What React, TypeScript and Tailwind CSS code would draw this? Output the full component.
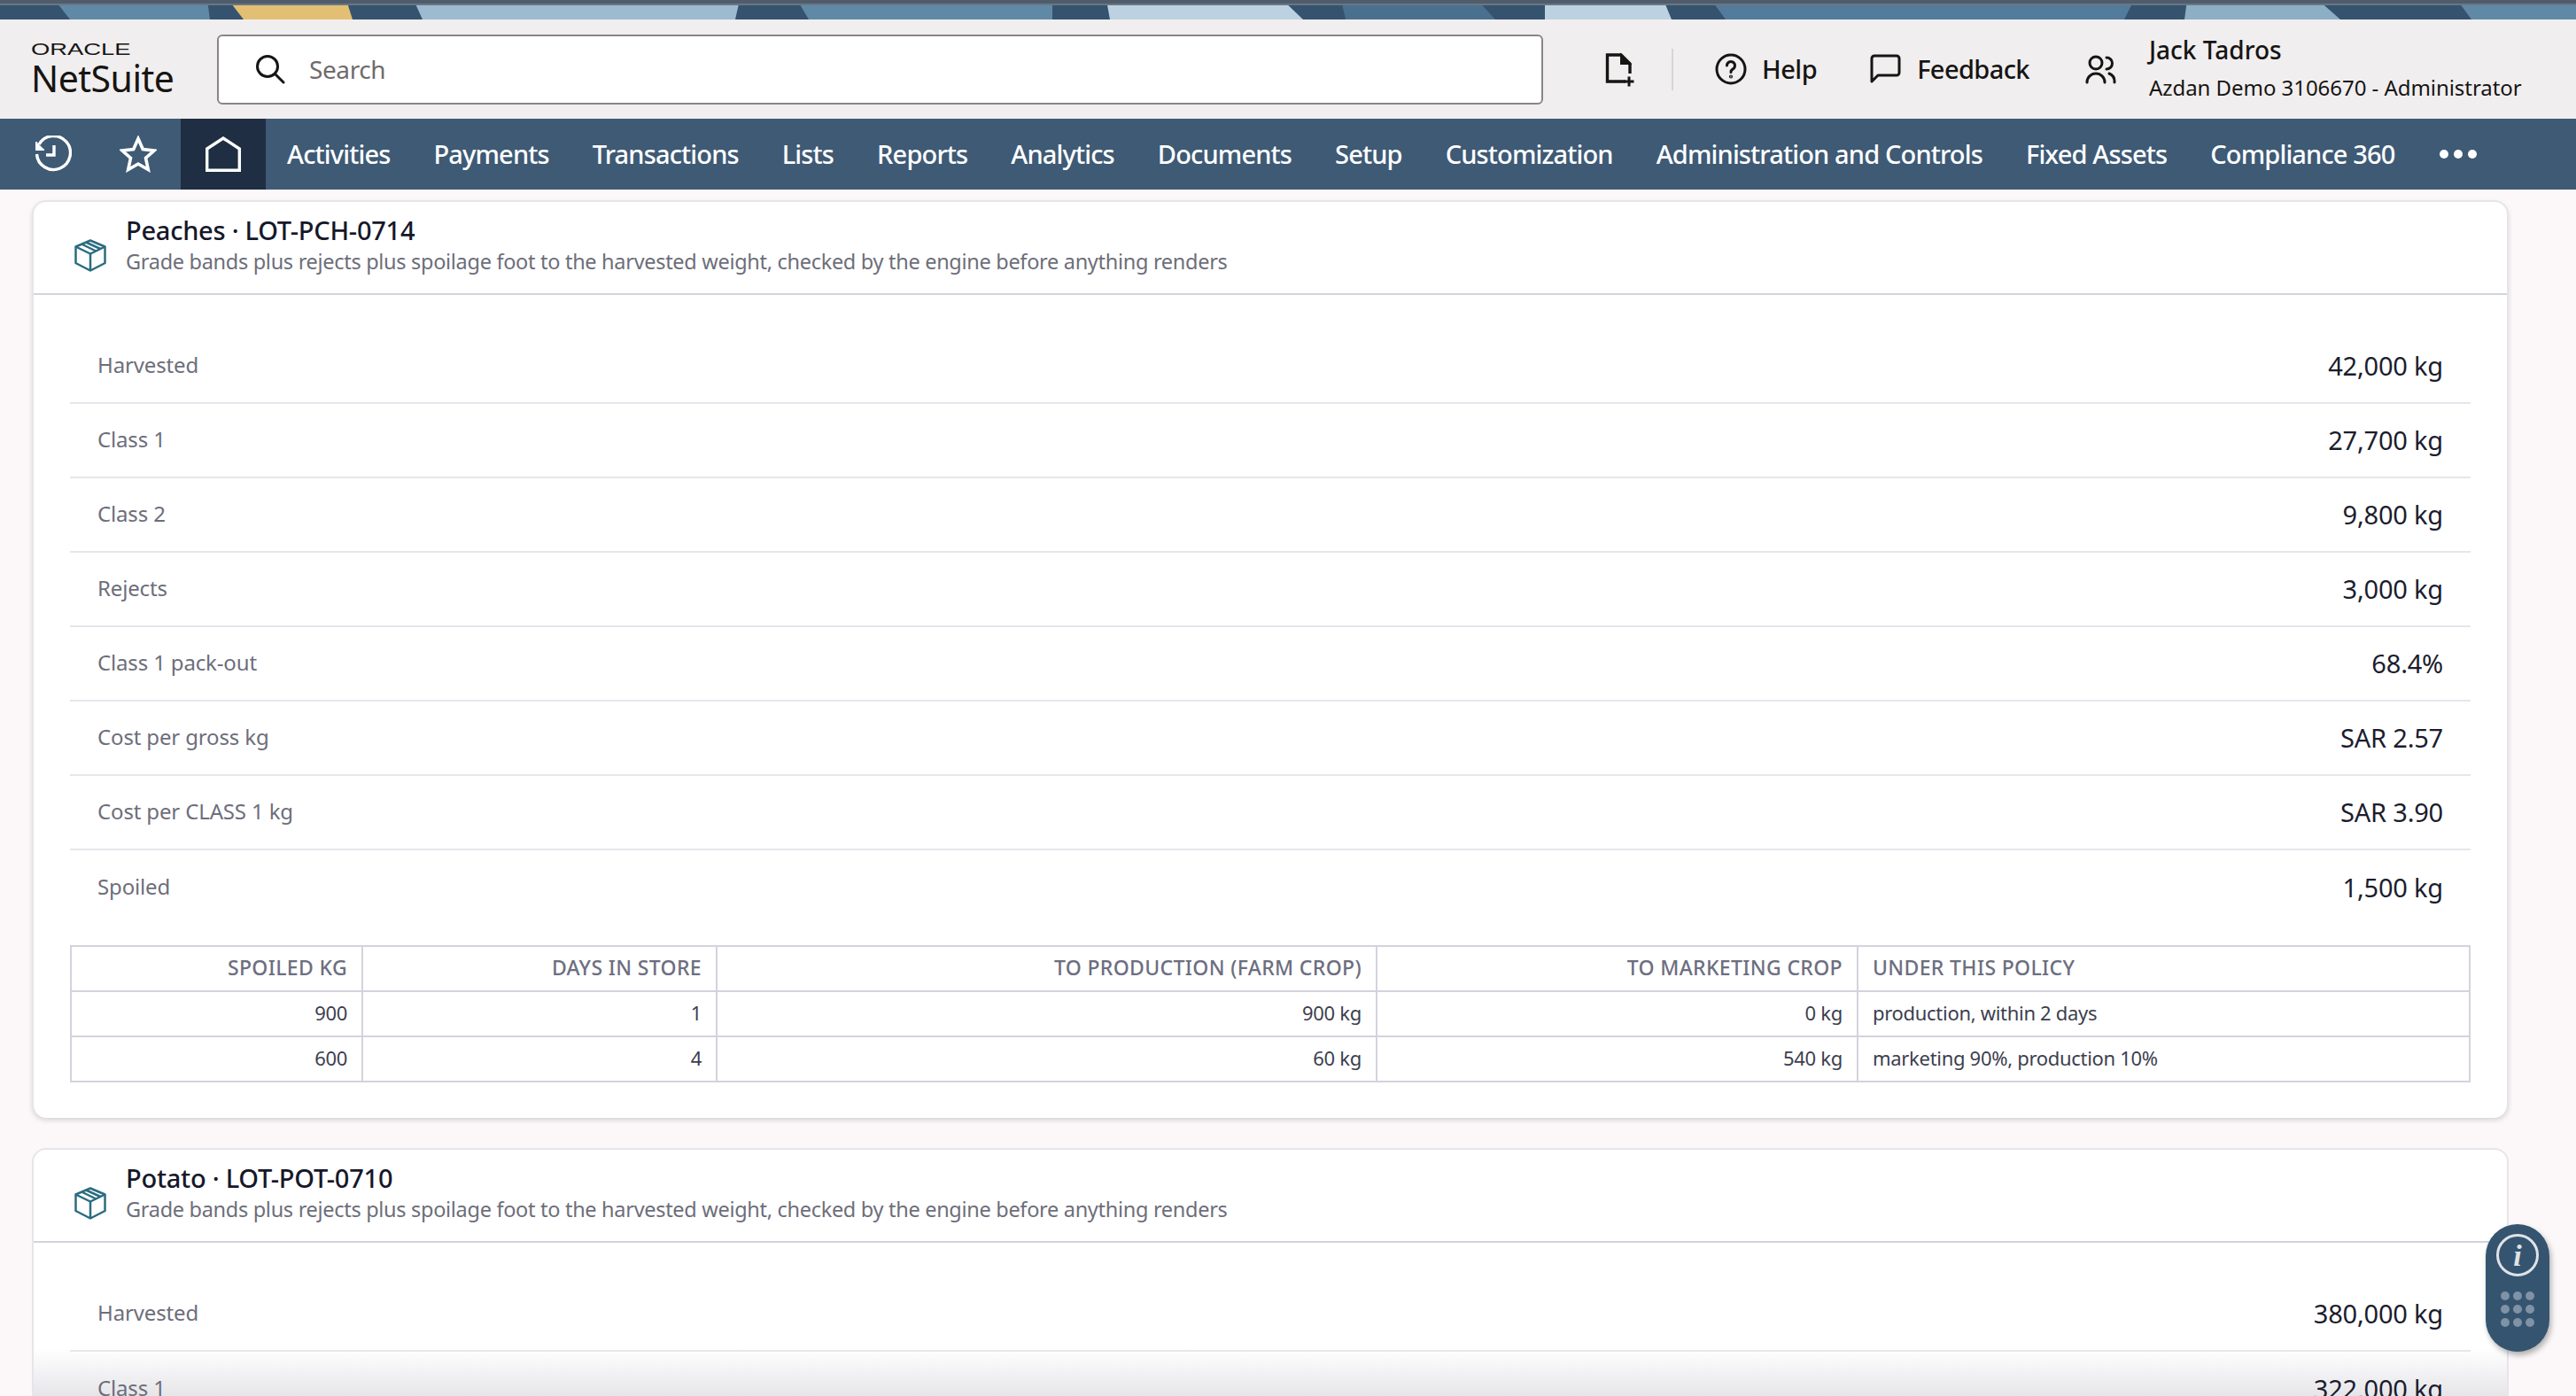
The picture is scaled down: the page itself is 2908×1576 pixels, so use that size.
const navItems = ['Activities', 'Payments', 'Transactions', 'Lists', 'Reports', 'Analytics', 'Documents', 'Setup', 'Customization', 'Administration and Controls', 'Fixed Assets', 'Compliance 360'];

const bands: [string, string][] = [
  ['#6089a8', '62,0 234,0 237,22 79,22'],
  ['#e3bf74', '258,0 391,0 398,22 275,22'],
  ['#9cbad0', '467,0 835,0 830,22 477,22'],
  ['#6089a8', '900,0 1188,0 1188,22 913,22'],
  ['#bcd2e2', '1249,0 1448,0 1471,22 1253,22'],
  ['#4a7090', '1514,0 1668,0 1688,22 1519,22'],
  ['#bcd2e2', '1744,0 1878,0 1887,22 1744,22'],
  ['#537b9c', '1932,0 2409,0 2398,22 1948,22'],
  ['#8cafc6', '2469,0 2617,0 2642,22 2466,22'],
  ['#6089a8', '2774,0 2908,0 2908,22 2790,22'],
];

const peachRows = [
  ['Harvested', '42,000 kg'],
  ['Class 1', '27,700 kg'],
  ['Class 2', '9,800 kg'],
  ['Rejects', '3,000 kg'],
  ['Class 1 pack-out', '68.4%'],
  ['Cost per gross kg', 'SAR 2.57'],
  ['Cost per CLASS 1 kg', 'SAR 3.90'],
  ['Spoiled', '1,500 kg'],
];

function Banner() {
  return (
    <div className="h-[22px] shrink-0 relative bg-[#35536e]">
      <svg viewBox="0 0 2908 22" className="block w-full h-[22px]">
        {bands.map(([fill, points]) => (
          <polygon key={points} fill={fill} points={points} />
        ))}
      </svg>
      <div className="absolute left-0 right-0 top-0 h-[6px] bg-[#4f5c6b] border-b-2 border-[#6b7682]" />
    </div>
  );
}

function BoxIcon() {
  return (
    <svg width="36" height="37" viewBox="0 0 36 37" fill="none" stroke="#2b6c80" strokeWidth="2.5" strokeLinejoin="round" className="shrink-0">
      <path d="M18 1.5 34.5 8.5V27L18 35.5 1.5 27V8.5z" />
      <path d="M1.5 8.5 18 16.5 34.5 8.5" />
      <path d="M18 16.5v19" />
      <path d="M8 5.5 24.5 13.5" />
      <path d="M13 3.5 29.5 11" />
    </svg>
  );
}

function CardHeader({ title }: { title: string }) {
  return (
    <div className="h-[105px] flex items-center gap-[22px] pl-[46px] pb-[7px] border-b-2 border-[#d3d3de]">
      <div className="mt-[24px]"><BoxIcon /></div>
      <div>
        <div className="text-[29px] leading-[38px] font-medium tracking-[-0.25px] text-[#16182a]">{title}</div>
        <div className="text-[23.5px] leading-[33px] tracking-[-0.3px] text-[#6d6e7a]">Grade bands plus rejects plus spoilage foot to the harvested weight, checked by the engine before anything renders</div>
      </div>
    </div>
  );
}

function MetricRow({ label, value, last }: { label: string; value: string; last?: boolean }) {
  return (
    <div className={last ? 'h-[84px] flex items-center justify-between px-[31px]' : 'h-[84px] flex items-center justify-between px-[31px] border-b-2 border-[#e6e6ec]'}>
      <span className="text-[24px] tracking-[-0.15px] mb-[2px] text-[#6d6e7a]">{label}</span>
      <span className="text-[29px] tracking-[-0.2px] text-[#1b1d2e]">{value}</span>
    </div>
  );
}

const thRight = 'border-2 border-[#d3d3de] font-medium px-[16px] pb-[2px] text-right';
const tdRight = 'border-2 border-[#d3d3de] px-[16px] pb-[2px] text-right';

function SpoilageTable() {
  return (
    <table className="w-full table-fixed border-collapse text-[22px] tracking-[-0.3px] text-[#3c3e4e] mt-[23px]">
      <colgroup>
        <col className="w-[329px]" />
        <col className="w-[400px]" />
        <col className="w-[745px]" />
        <col className="w-[543px]" />
        <col />
      </colgroup>
      <thead>
        <tr className="h-[51px] text-[23px] text-[#6d6e7f] tracking-[0.35px]">
          <th className={thRight}>SPOILED KG</th>
          <th className={thRight}>DAYS IN STORE</th>
          <th className={thRight}>TO PRODUCTION (FARM CROP)</th>
          <th className={thRight}>TO MARKETING CROP</th>
          <th className="border-2 border-[#d3d3de] font-medium px-[16px] pb-[2px] text-left">UNDER THIS POLICY</th>
        </tr>
      </thead>
      <tbody>
        <tr className="h-[51px]">
          <td className={tdRight}>900</td>
          <td className={tdRight}>1</td>
          <td className={tdRight}>900 kg</td>
          <td className={tdRight}>0 kg</td>
          <td className="border-2 border-[#d3d3de] px-[16px] pb-[2px]">production, within 2 days</td>
        </tr>
        <tr className="h-[51px]">
          <td className={tdRight}>600</td>
          <td className={tdRight}>4</td>
          <td className={tdRight}>60 kg</td>
          <td className={tdRight}>540 kg</td>
          <td className="border-2 border-[#d3d3de] px-[16px] pb-[2px]">marketing 90%, production 10%</td>
        </tr>
      </tbody>
    </table>
  );
}

export default function App() {
  return (
    <div className="w-[2908px] h-[1576px] overflow-hidden relative flex flex-col bg-[#fcf8f9] font-['Noto_Sans',sans-serif]">
      <Banner />

      <header className="h-[112px] shrink-0 bg-[#f1eeef] flex items-center pl-[35px] text-[#161513]">
        <div className="w-[210px] shrink-0 flex flex-col pt-[2px]">
          <span className="text-[19px] leading-[18px] font-['Liberation_Sans',sans-serif] origin-left scale-x-[1.44]">ORACLE</span>
          <span className="text-[41px] leading-[46px] tracking-[-0.5px]">NetSuite</span>
        </div>
        <div className="w-[1497px] h-[79px] shrink-0 bg-white border-2 border-[#8a8687] rounded-[6px] flex items-center pl-[41px] gap-[27px]">
          <svg width="34" height="34" viewBox="0 0 34 34" fill="none" stroke="#161513" strokeWidth="3" strokeLinecap="round">
            <circle cx="14" cy="14" r="11.5" />
            <path d="M22.5 22.5 32 32" />
          </svg>
          <span className="text-[28px] tracking-[-0.4px] text-[#6f6b6c]">Search</span>
        </div>
        <svg width="34" height="36" viewBox="0 0 34 36" fill="none" stroke="#161513" strokeWidth="3.4" className="ml-[70px] shrink-0 overflow-visible">
          <path d="M23 32H2.5V2H18L28 12V23" />
          <path d="M18 2V12H28z" fill="#161513" strokeWidth="2" />
          <path d="M27 26.5v11M21.5 32h11" strokeWidth="3" />
        </svg>
        <div className="w-[2px] h-[47px] bg-[#d8d4d5] ml-[41px] shrink-0" />
        <svg width="36" height="36" viewBox="0 0 36 36" fill="none" stroke="#161513" strokeWidth="3" strokeLinecap="round" className="ml-[47px] shrink-0">
          <circle cx="18" cy="18" r="16" />
          <path d="M13.5 14a4.5 4.5 0 1 1 6.8 3.9c-1.5.9-2.3 1.8-2.3 3.6" />
          <circle cx="18" cy="26.5" r="0.6" fill="#161513" />
        </svg>
        <span className="ml-[17px] text-[29px] font-medium tracking-[-0.5px]">Help</span>
        <svg width="36" height="34" viewBox="0 0 36 34" fill="none" stroke="#161513" strokeWidth="3" strokeLinejoin="round" className="ml-[59px] shrink-0">
          <path d="M3 5a3 3 0 0 1 3-3h25a3 3 0 0 1 3 3v16a3 3 0 0 1-3 3H10l-7 7z" />
        </svg>
        <span className="ml-[18px] text-[29px] font-medium tracking-[-0.6px]">Feedback</span>
        <svg width="36" height="36" viewBox="0 0 36 36" fill="none" stroke="#161513" strokeWidth="3" strokeLinecap="round" className="ml-[62px] shrink-0">
          <circle cx="13" cy="11" r="7" />
          <path d="M3 33a10 10 0 0 1 20 0" />
          <path d="M25 5a6.5 6.5 0 0 1 0 13" />
          <path d="M28 23a10 10 0 0 1 6 10" />
        </svg>
        <div className="ml-[37px] flex flex-col whitespace-nowrap">
          <span className="text-[28px] leading-[36px] font-medium">Jack Tadros</span>
          <span className="text-[24px] leading-[38px] mt-[6px] tracking-[-0.05px]">Azdan Demo 3106670 - Administrator</span>
        </div>
      </header>

      <nav className="h-[80px] shrink-0 bg-[#3e5a75] flex items-center text-white">
        <svg width="42" height="42" viewBox="0 0 42 42" fill="none" stroke="#fff" strokeWidth="3.4" className="ml-[39px] shrink-0">
          <path d="M5 10A19 19 0 1 1 2.5 21" />
          <path d="M2 7v9h9" fill="#fff" strokeWidth="2" />
          <path d="M22 11v11h-9" />
        </svg>
        <svg width="42" height="42" viewBox="0 0 42 42" fill="none" stroke="#fff" strokeWidth="3.6" strokeLinejoin="miter" className="ml-[54px] shrink-0">
          <path d="M21 3.5 26.3 15.5 39 17 29.5 25.5 32.3 38.5 21 32 9.7 38.5 12.5 25.5 3 17 15.7 15.5z" />
        </svg>
        <div className="ml-[27px] w-[96px] h-full bg-[#1f2e42] flex items-center justify-center shrink-0">
          <svg width="40" height="40" viewBox="0 0 40 40" fill="none" stroke="#fff" strokeWidth="3.4">
            <path d="M1.7 38.3V14L20 2l18.3 12v24.3z" />
          </svg>
        </div>
        <div className="ml-[24px] flex items-center gap-[49px] text-[29px] font-medium tracking-[-0.85px]">
          {navItems.map(item => (
            <span key={item} className="whitespace-nowrap">{item}</span>
          ))}
          <div className="flex gap-[6px] ml-[1px]">
            <span className="w-[10px] h-[10px] rounded-full bg-white" />
            <span className="w-[10px] h-[10px] rounded-full bg-white" />
            <span className="w-[10px] h-[10px] rounded-full bg-white" />
          </div>
        </div>
      </nav>

      <main className="flex-1 min-h-0 overflow-hidden flex flex-col gap-[34px] pl-[36px] pr-[76px] pt-[12px]">
        <section className="h-[1036px] shrink-0 bg-white rounded-[16px] border-2 border-[#e6e5ea] border-b-0 shadow-[0_3px_5px_rgba(120,120,135,0.25)]">
          <CardHeader title="Peaches · LOT-PCH-0714" />
          <div className="px-[41px] pt-[39px]">
            {peachRows.map(([label, value], i) => (
              <MetricRow key={label} label={label} value={value} last={i === peachRows.length - 1} />
            ))}
            <SpoilageTable />
          </div>
        </section>
        <section className="h-[280px] shrink-0 overflow-hidden relative bg-white rounded-t-[16px] border-2 border-[#e6e5ea] border-b-0">
          <div className="absolute left-0 right-0 bottom-0 h-[54px] bg-gradient-to-b from-white to-[#e6e6ea]" />
          <div className="relative">
            <CardHeader title="Potato · LOT-POT-0710" />
            <div className="px-[41px] pt-[39px]">
              <MetricRow label="Harvested" value="380,000 kg" />
              <MetricRow label="Class 1" value="322,000 kg" last />
            </div>
          </div>
        </section>
      </main>

      <div className="absolute left-[2806px] top-[1382px] w-[72px] h-[144px] rounded-full bg-[#355470] shadow-[2px_4px_6px_rgba(0,0,0,0.3)] flex flex-col items-center pt-[11px]">
        <div className="w-[48px] h-[48px] rounded-full border-[3px] border-[#dfe3e6] flex items-center justify-center text-[#dfe3e6] text-[34px] italic font-['Liberation_Serif',serif] font-bold">i</div>
        <div className="grid grid-cols-3 gap-x-[4px] gap-y-[5px] mt-[17px]">
          {[0, 1, 2, 3, 4, 5, 6, 7, 8].map(n => (
            <span key={n} className="w-[10px] h-[10px] rounded-full bg-[#7f92a6]" />
          ))}
        </div>
      </div>
    </div>
  );
}
